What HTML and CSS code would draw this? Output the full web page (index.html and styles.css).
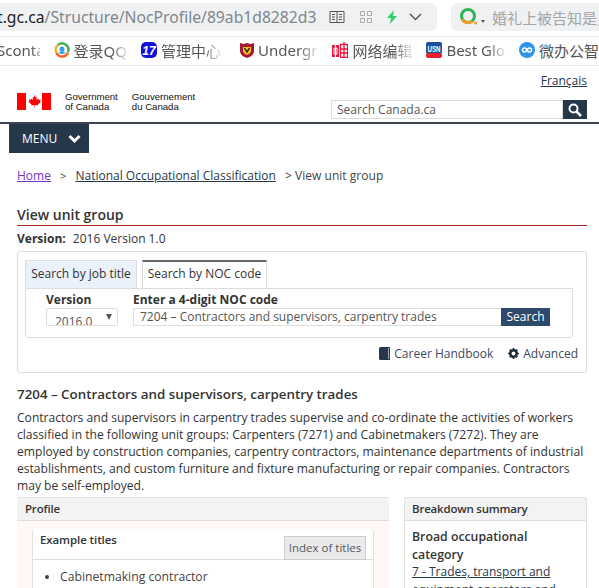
FILE: index.html

```html
<!DOCTYPE html>
<html lang="en">
<head>
    <meta charset="UTF-8">
    <title>View unit group</title>
    <link rel="stylesheet" href="styles.css">
</head>
<body>
    <div class="toolbar">
        <div class="address-bar">
            <div class="url"><span class="url-host">t.gc.ca</span>/Structure/NocProfile/89ab1d8282d3</div>
            <div class="address-icons">
                <svg class="reader" width="16" height="14" viewBox="0 0 16 14"><path d="M1 1.500h14v11H1zM8 1.500v11M3 4.500h3M3 7h3M3 9.500h3M10 4.500h3M10 7h3M10 9.500h3" fill="none" stroke="#555" stroke-width="1"/></svg>
                <svg class="qr" width="12" height="12" viewBox="0 0 12 12"><path d="M0.500 0.500h4v4h-4zM7.500 0.500h4v4h-4zM0.500 7.500h4v4h-4zM7.500 7.500h4v4h-4z" fill="none" stroke="#aaa"/></svg>
                <svg width="12" height="14" viewBox="0 0 12 14"><path d="M8 0L1 8h4l-1 6 7-8H7z" fill="#2fd06c"/></svg>
                <svg width="13" height="8" viewBox="0 0 13 8"><path d="M1 1l5.500 5.500L12 1" fill="none" stroke="#555" stroke-width="1.500"/></svg>
            </div>
        </div>
        <div class="search-bar">
            <svg width="18" height="18" viewBox="0 0 18 18"><circle cx="8" cy="8" r="6.500" fill="none" stroke="#2fb457" stroke-width="3"/><path d="M2.500 11.500a6.500 6.500 0 0 0 10 1.500" fill="none" stroke="#f59a23" stroke-width="3"/><circle cx="15.500" cy="15" r="1.500" fill="#f59a23"/></svg>
            <span class="caret"></span>
            <span class="search-text">婚礼上被告知是男</span>
        </div>
    </div>

    <div class="bookmarks">
        <span class="bookmark first"><span class="bm-label">Sconta</span></span>
        <span class="bookmark">
            <svg width="16" height="16" viewBox="0 0 16 16"><path d="M2.500 11A6.300 6.300 0 0 1 4 3" fill="none" stroke="#f5b323" stroke-width="2.500"/><path d="M4 3a6.300 6.300 0 0 1 10 7" fill="none" stroke="#4caf50" stroke-width="2.500"/><path d="M14 10.500a6.300 6.300 0 0 1-11.500 .5" fill="none" stroke="#f0662a" stroke-width="2.500"/><circle cx="8" cy="7" r="2.500" fill="#3b9be8"/><path d="M4.500 11q3.500-4 7 0q-3.500 2-7 0z" fill="#3b9be8"/></svg>
            <span class="bm-label">登录QQ</span>
        </span>
        <span class="bookmark">
            <svg width="16" height="16" viewBox="0 0 16 16"><rect width="16" height="16" rx="5" fill="#1212d8"/><text x="8" y="13" text-anchor="middle" class="icon-text">17</text></svg>
            <span class="bm-label">管理中心</span>
        </span>
        <span class="bookmark under">
            <svg width="14" height="16" viewBox="0 0 14 16"><path d="M0 1l3.500 1L7 1l3.500 1L14 1v8q0 5-7 7Q0 14 0 9z" fill="#a6192e"/><path d="M3 5h8v4q0 2-4 4-4-2-4-4z" fill="#f5c518"/><path d="M4.500 6L7 10l2.500-4" fill="none" stroke="#4a2a10" stroke-width="1.500"/></svg>
            <span class="bm-label">Undergr</span>
        </span>
        <span class="bookmark">
            <svg width="16" height="16" viewBox="0 0 16 16"><rect y="3" width="7" height="12" fill="#e8173c"/><path d="M2 6h3v6H2zM3.500 3v12" fill="none" stroke="#fff"/><path d="M8.500 2.500h7v13h-7zM8.500 7h7M8.500 11h7M12 0v16" fill="none" stroke="#e8173c" stroke-width="1.300"/></svg>
            <span class="bm-label">网络编辑</span>
        </span>
        <span class="bookmark">
            <svg width="16" height="16" viewBox="0 0 16 16"><rect width="16" height="12" rx="2" fill="#1c4f9c"/><rect y="11" width="16" height="5" rx="2" fill="#e8202e"/><text x="8" y="9.500" text-anchor="middle" textLength="13" lengthAdjust="spacingAndGlyphs" class="icon-text small">USN</text></svg>
            <span class="bm-label">Best Glo</span>
        </span>
        <span class="bookmark">
            <svg width="16" height="16" viewBox="0 0 16 16"><circle cx="8" cy="8" r="8" fill="#2f95ea"/><circle cx="5.500" cy="8" r="2" fill="none" stroke="#fff" stroke-width="1.500"/><circle cx="10.500" cy="8" r="2" fill="none" stroke="#fff" stroke-width="1.500"/></svg>
            微办公智
        </span>
    </div>

    <div class="page">
        <div class="lang"><a href="#">Français</a></div>
        <div class="site-header">
            <div class="brand">
                <svg class="flag" width="34" height="17" viewBox="0 0 34 17">
                    <rect width="34" height="17" fill="#fff"/>
                    <rect width="9" height="17" fill="#f00"/>
                    <rect x="25" width="9" height="17" fill="#f00"/>
                    <path d="M17 2l1.500 2.500 1.300-.6-.5 3 1.800-1.400.5 1.200 2-.3-.6 2 .8.500-3 2.500.3 1.100-3.100-.4v2.400h-.6v-2.400l-3.100.4.300-1.100-3-2.500.8-.5-.6-2 2 .3.500-1.200 1.800 1.400-.5-3 1.300.6z" fill="#f00"/>
                </svg>
                <div class="brand-name">Government<br>of Canada</div>
                <div class="brand-name">Gouvernement<br>du Canada</div>
            </div>
            <div class="site-search">
                <div class="site-search-input">Search Canada.ca</div>
                <div class="site-search-btn">
                    <svg width="14" height="14" viewBox="0 0 14 14"><circle cx="5.500" cy="5.500" r="4" fill="none" stroke="#fff" stroke-width="2"/><path d="M8.500 8.500L13 13" stroke="#fff" stroke-width="2.500"/></svg>
                </div>
            </div>
        </div>
    </div>

    <div class="menu-rule"></div>
    <div class="menu-btn">MENU <svg width="13" height="10" viewBox="0 0 13 10"><path d="M1.500 2l5 5 5-5" fill="none" stroke="#fff" stroke-width="3"/></svg></div>

    <div class="page">
        <div class="breadcrumb">
            <a href="#" class="visited">Home</a>
            <span class="sep">&gt;</span>
            <a href="#">National Occupational Classification</a>
            <span class="sep-last">&gt; View unit group</span>
        </div>

        <h1 class="page-title">View unit group</h1>
        <p class="version"><b>Version:</b> 2016 Version 1.0</p>

        <div class="well">
            <div class="tabs">
                <div class="tab">Search by job title</div>
                <div class="tab active">Search by NOC code</div>
            </div>
            <div class="tab-panel">
                <div class="field field-version">
                    <label>Version</label>
                    <div class="select"><span class="select-value">2016.0</span><span class="select-arrow"></span></div>
                </div>
                <div class="field field-code">
                    <label>Enter a 4-digit NOC code</label>
                    <div class="code-row">
                        <div class="code-input">7204 – Contractors and supervisors, carpentry trades</div>
                        <div class="code-btn">Search</div>
                    </div>
                </div>
            </div>
            <div class="well-links">
                <a href="#">
                    <svg width="11" height="13" viewBox="0 0 11 13"><path d="M0 1.500Q0 0 1.500 0H11v13H1.500Q0 13 0 11.500z" fill="#26374a"/><path d="M9.500 1v11" stroke="#9ab" stroke-width="1"/></svg>
                    Career Handbook
                </a>
                <a href="#">
                    <svg width="11" height="11" viewBox="0 0 13 13"><circle cx="6.500" cy="6.500" r="3.800" fill="none" stroke="#1e2c3c" stroke-width="3"/><path d="M6.500 0v13M0 6.500h13M2 2l9 9M11 2l-9 9" stroke="#1e2c3c" stroke-width="2" stroke-dasharray="2.500 9"/></svg>
                    Advanced
                </a>
            </div>
        </div>

        <h2 class="noc-title">7204 – Contractors and supervisors, carpentry trades</h2>
        <p class="noc-desc">Contractors and supervisors in carpentry trades supervise and co-ordinate the activities of workers classified in the following unit groups: Carpenters (7271) and Cabinetmakers (7272). They are employed by construction companies, carpentry contractors, maintenance departments of industrial establishments, and custom furniture and fixture manufacturing or repair companies. Contractors may be self-employed.</p>

        <div class="columns">
            <div class="panel profile">
                <div class="panel-head">Profile</div>
                <div class="profile-body">
                    <div class="inner-card">
                        <div class="inner-head">
                            <span>Example titles</span>
                            <div class="index-btn">Index of titles</div>
                        </div>
                        <ul class="titles">
                            <li>Cabinetmaking contractor</li>
                        </ul>
                    </div>
                </div>
            </div>
            <div class="panel summary">
                <div class="panel-head">Breakdown summary</div>
                <div class="summary-body">
                    <b>Broad occupational category</b><br>
                    <a href="#">7 - Trades, transport and equipment operators and</a>
                </div>
            </div>
        </div>
    </div>
</body>
</html>
```

FILE: styles.css

```css
* { margin: 0; padding: 0; box-sizing: border-box; }
html, body {
    height: 588px;
    overflow: hidden;
}
body {
    font-family: "Open Sans", "Noto Sans", sans-serif;
    font-size: 13px;
    color: #333;
    background: #fff;
}
a { color: #26374a; }
svg { flex: none; }
.toolbar {
    display: flex;
    gap: 14px;
    height: 37px;
    padding-top: 3px;
    border-bottom: 1px solid #e8e8e8;
    overflow: hidden;
}
.address-bar {
    display: flex;
    align-items: center;
    justify-content: space-between;
    flex: 0 0 437px;
    height: 28px;
    background: #eff1f3;
    border-radius: 0 6px 6px 0;
    overflow: hidden;
}
.url {
    margin-left: -3px;
    font-family: "Noto Sans", sans-serif;
    font-size: 15.700px;
    color: #80868b;
    white-space: nowrap;
}
.url-host { color: #222; }
.address-icons {
    display: flex;
    align-items: center;
    gap: 11px;
    padding-right: 15px;
}
.reader { margin-right: 4px; }
.qr { margin-right: 3px; }
.search-bar {
    display: flex;
    align-items: center;
    flex: 1;
    height: 28px;
    padding-left: 9px;
    background: #eff1f3;
    border-radius: 6px 0 0 6px;
    overflow: hidden;
    white-space: nowrap;
}
.caret {
    margin: 8px 7px 0 3px;
    border-left: 2.500px solid transparent;
    border-right: 2.500px solid transparent;
    border-top: 3px solid #555;
}
.search-text {
    font-family: "Noto Sans CJK SC", sans-serif;
    font-size: 15px;
    color: #a5a5a5;
}
.bookmarks {
    display: flex;
    align-items: center;
    gap: 14px;
    height: 29px;
    padding-bottom: 2px;
    border-bottom: 1px solid #e8e8e8;
    font-family: "Noto Sans", "Noto Sans CJK SC", sans-serif;
    font-size: 15px;
    color: #555;
    white-space: nowrap;
    overflow: hidden;
}
.bookmark {
    display: flex;
    align-items: center;
    gap: 4px;
}
.bookmark.first { margin-left: -3px; width: 46px; overflow: hidden; }
.bookmark.under { margin-left: 5px; margin-right: 1px; }
/* tab titles fade out at the end, as the browser draws them */
.bm-label {
    -webkit-mask-image: linear-gradient(90deg, #000 70%, rgba(0,0,0,0.15));
    mask-image: linear-gradient(90deg, #000 70%, rgba(0,0,0,0.15));
}
.icon-text {
    font-family: "Liberation Sans", sans-serif;
    font-size: 12px;
    font-weight: 700;
    font-style: italic;
    fill: #fff;
}
.icon-text.small { font-size: 9px; font-style: normal; }

.page { padding: 0 12px 0 17px; }
.lang {
    height: 21px;
    padding-top: 6px;
    text-align: right;
    font-size: 12px;
    line-height: 17px;
}
.site-header {
    display: flex;
    justify-content: space-between;
    height: 32px;
    padding-top: 6px;
}
.brand {
    display: flex;
    align-items: flex-start;
}
.flag { margin-right: 14px; }
.brand-name {
    margin: -1px 14px 0 0;
    font-family: "Liberation Sans", sans-serif;
    font-size: 9.600px;
    line-height: 9.500px;
    color: #111;
}
.site-search {
    display: flex;
    height: 19px;
    margin-top: 7px;
}
.site-search-input {
    width: 232px;
    padding-left: 5px;
    border: 1px solid #ddd;
    font-size: 12px;
    line-height: 17px;
    color: #555;
}
.site-search-btn {
    display: flex;
    align-items: center;
    justify-content: center;
    width: 24px;
    background: #26374a;
}
.menu-rule {
    height: 2px;
    background: #3d4650;
    margin-top: 3px;
}
.menu-btn {
    display: flex;
    align-items: center;
    gap: 11px;
    width: 80px;
    height: 29px;
    margin-left: 9px;
    padding-left: 13px;
    background: #26374a;
    color: #fff;
    font-size: 12px;
}

.breadcrumb {
    margin-top: 14px;
    font-size: 12px;
    line-height: 17px;
    color: #444;
}
.breadcrumb .visited { color: #7834bc; }
.breadcrumb .sep { margin: 0 6px; font-size: 11px; }
.breadcrumb .sep-last { margin-left: 6px; letter-spacing: 0.03px; }
.page-title {
    margin-top: 21px;
    border-bottom: 1px solid #a62a1e;
    font-size: 14px;
    font-weight: 600;
    line-height: 20px;
    color: #333;
}
.version {
    margin-top: 4px;
    font-size: 12px;
    line-height: 17px;
}
.version b { font-weight: 700; margin-right: 4px; }
.well {
    height: 122px;
    margin-top: 4px;
    padding: 8px 13px 0 7px;
    border: 1px solid #ddd;
    border-radius: 3px;
}
.tabs {
    display: flex;
    gap: 5px;
    height: 28px;
}
.tab {
    width: 112px;
    height: 28px;
    border: 1px solid #ddd;
    border-bottom: 0;
    background: #eaf1fb;
    font-size: 12px;
    line-height: 26px;
    text-align: center;
    color: #333;
}
.tab.active {
    width: 125px;
    border-top: 2px solid #666;
    background: #fff;
    line-height: 24px;
}
.tab-panel {
    display: flex;
    height: 50px;
    border: 1px solid #ddd;
    border-radius: 0 0 3px 3px;
    padding: 3px 22px 0 20px;
    gap: 15px;
}
.field label {
    display: block;
    font-size: 12px;
    font-weight: 700;
    line-height: 16px;
}
.field-version { flex: 0 0 72px; }
.field-code { flex: 1; }
.select {
    position: relative;
    height: 18px;
    border: 1px solid #ddd;
    border-radius: 2px;
    overflow: hidden;
}
.select-value {
    display: block;
    padding: 4px 0 0 8px;
    font-size: 12px;
    line-height: 17px;
    color: #555;
}
.select-arrow {
    position: absolute;
    top: 5px;
    right: 5px;
    border-left: 3px solid transparent;
    border-right: 3px solid transparent;
    border-top: 6px solid #555;
}
.code-row { display: flex; }
.code-input {
    flex: 1;
    height: 18px;
    padding-left: 6px;
    border: 1px solid #ddd;
    border-right: 0;
    font-size: 12px;
    line-height: 16px;
    color: #555;
}
.code-btn {
    width: 49px;
    height: 18px;
    background: #2d4a6b;
    color: #fff;
    font-size: 12px;
    line-height: 17px;
    text-align: center;
}
.well-links {
    display: flex;
    justify-content: flex-end;
    gap: 15px;
    margin: 7px -5px 0 0;
    font-size: 12px;
    line-height: 17px;
}
.well-links a {
    display: flex;
    align-items: center;
    gap: 4px;
    text-decoration: none;
    color: #3a4a5c;
}
.noc-title {
    margin-top: 12px;
    font-size: 13.350px;
    font-weight: 600;
    line-height: 18px;
    color: #333;
}
.noc-desc {
    margin-top: 6px;
    font-size: 12.100px;
    line-height: 17px;
    color: #333;
}
.columns {
    display: flex;
    justify-content: space-between;
    height: 92px;
    margin-top: 3px;
    overflow: hidden;
}
.panel {
    border: 1px solid #e0e0e0;
    border-bottom: 0;
    border-radius: 2px 2px 0 0;
}
.profile {
    flex: 0 0 372px;
    border-width: 1px 0 0;
}
.summary { flex: 0 0 183px; }
.panel-head {
    height: 23px;
    padding-left: 7px;
    background: #f3f3f3;
    border-bottom: 1px solid #ddd;
    font-size: 11.500px;
    font-weight: 600;
    letter-spacing: -0.2px;
    line-height: 22px;
    color: #333;
}
.profile .panel-head { padding-left: 8px; }
.profile-body {
    height: 68px;
    padding: 8px 15px 0;
    background: #fff8f7;
}
.inner-card {
    height: 60px;
    background: #fff;
    border: 1px solid #e0e0e0;
    border-width: 0 1px;
    border-radius: 3px 3px 0 0;
}
.inner-head {
    position: relative;
    height: 31px;
    padding: 2px 0 0 7px;
    border-bottom: 1px solid #ddd;
    font-size: 11.500px;
    font-weight: 600;
    letter-spacing: -0.1px;
    line-height: 17px;
}
.index-btn {
    position: absolute;
    top: 7px;
    right: 7px;
    width: 82px;
    height: 24px;
    background: #e9eaec;
    border: 1px solid #ccc;
    font-size: 11.500px;
    font-weight: 400;
    letter-spacing: 0;
    line-height: 22px;
    text-align: center;
    color: #555;
}
.titles {
    padding: 8px 0 0 27px;
    font-size: 12.200px;
    line-height: 17px;
    color: #444;
}
.summary-body {
    padding: 7px 7px 0;
    font-size: 12px;
    line-height: 17.500px;
}
.summary-body b { font-size: 12.300px; font-weight: 600; color: #333; }
```
